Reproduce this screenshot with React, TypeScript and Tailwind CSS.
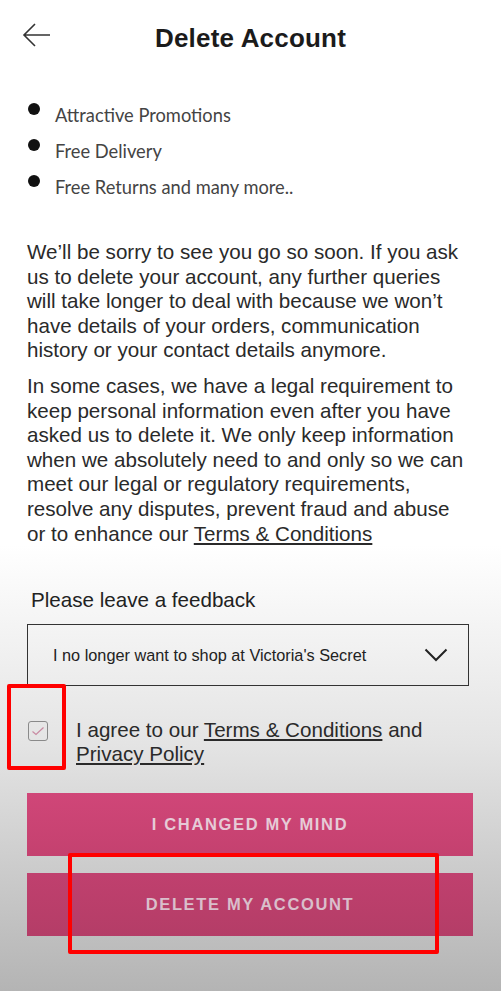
import React from 'react';

const perks = ['Attractive Promotions', 'Free Delivery', 'Free Returns and many more..'];

export default function App() {
  return (
    <div
      className="relative w-[501px] h-[991px] overflow-hidden bg-[linear-gradient(180deg,#ffffff_0%,#ffffff_55%,#e4e4e4_75%,#b4b4b4_100%)] text-[#222]"
      style={{ fontFamily: '"Liberation Sans", Arial, sans-serif' }}
    >
      {/* header */}
      <div className="relative h-[76px] flex items-center justify-center">
        <button className="absolute left-[22px] top-[22px]">
          <svg width="30" height="26" viewBox="0 0 30 26" fill="none" stroke="#333" strokeWidth="1.6">
            <path d="M28 13H2M13 2L2 13l11 11" />
          </svg>
        </button>
        <h1 className="text-[26px] font-bold text-[#1b1b1b] tracking-[0.2px]">Delete Account</h1>
      </div>

      <ul className="pl-[28px] pt-[29px] space-y-[15px]" style={{ fontFamily: 'Lato, "Noto Sans", sans-serif' }}>
        {perks.map((p) => (
          <li key={p} className="flex items-start text-[18.3px] leading-[21px] text-[#444]">
            <span className="mt-[-2px] mr-[15px] w-[12px] h-[12px] rounded-full bg-[#111] shrink-0" />
            <span>{p}</span>
          </li>
        ))}
      </ul>

      <div className="px-[27px] pt-[42px] text-[20.6px] leading-[24.6px] text-[#2a2a2a]">
        <p>
          We’ll be sorry to see you go so soon. If you ask<br />
          us to delete your account, any further queries<br />
          will take longer to deal with because we won’t<br />
          have details of your orders, communication<br />
          history or your contact details anymore.
        </p>
        <p className="mt-[11px]">
          In some cases, we have a legal requirement to<br />
          keep personal information even after you have<br />
          asked us to delete it. We only keep information<br />
          when we absolutely need to and only so we can<br />
          meet our legal or regulatory requirements,<br />
          resolve any disputes, prevent fraud and abuse<br />
          or to enhance our <span className="underline underline-offset-2">Terms &amp; Conditions</span>
        </p>
      </div>

      <div className="px-[27px] pt-[42px]">
        <div className="pl-[4px] text-[20.6px] leading-[24px] text-[#222]">Please leave a feedback</div>
        <div className="mt-[12px] w-[442px] h-[62px] border border-[#333] flex items-center justify-between pl-[25px] pr-[20px]">
          <span className="text-[16.3px] text-[#222]">I no longer want to shop at Victoria's Secret</span>
          <svg width="24" height="14" viewBox="0 0 24 14" fill="none" stroke="#222" strokeWidth="2">
            <path d="M1.5 1.5L12 12L22.5 1.5" />
          </svg>
        </div>

        <div className="mt-[32px] flex items-start">
          <div className="mt-[3px] ml-[1px] w-[20px] h-[20px] rounded-[3px] border-[1.5px] border-[#8a8a8a] flex items-center justify-center shrink-0">
            <svg width="14" height="10" viewBox="0 0 14 10" fill="none" stroke="#c98aa2" strokeWidth="1.2">
              <path d="M1.5 5.5L5 8.5L12.5 1.5" />
            </svg>
          </div>
          <p className="ml-[28px] text-[20.6px] leading-[24px] text-[#2a2a2a]">
            I agree to our <span className="underline underline-offset-2">Terms &amp; Conditions</span> and<br />
            <span className="underline underline-offset-2">Privacy Policy</span>
          </p>
        </div>

        <div className="mt-[27px] flex flex-col gap-[17px] w-[446px]">
          <button className="h-[63px] bg-[linear-gradient(180deg,#d04678,#c4416f)] text-[#e6cbd7] text-[16.5px] font-bold tracking-[0.1em]">
            I CHANGED MY MIND
          </button>
          <button className="h-[63px] bg-[linear-gradient(180deg,#c0406e,#b43d67)] text-[#d9bfcb] text-[16.5px] font-bold tracking-[0.1em]">
            DELETE MY ACCOUNT
          </button>
        </div>
      </div>

      {/* annotation boxes */}
      <div className="absolute left-[7px] top-[684px] w-[59px] h-[86px] border-[4px] border-[#ff0000] rounded-[2px]" />
      <div className="absolute left-[68px] top-[853px] w-[371px] h-[101px] border-[4px] border-[#ff0000] rounded-[2px]" />
    </div>
  );
}
